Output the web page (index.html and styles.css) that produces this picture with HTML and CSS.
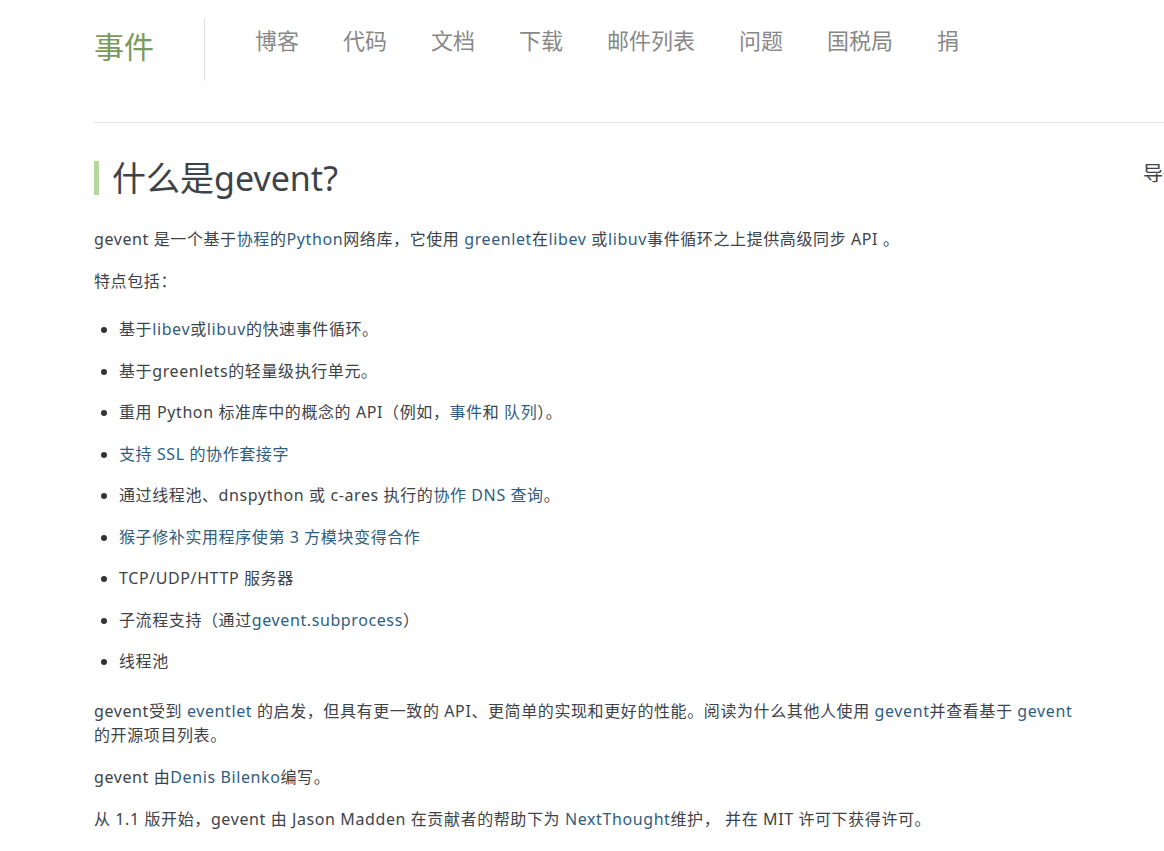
FILE: index.html
```html
<!DOCTYPE html>
<html lang="zh">
<head>
<meta charset="utf-8">
<title>gevent</title>
<link rel="stylesheet" href="styles.css">
</head>
<body>
<div class="page">
  <header class="header">
    <a class="logo" href="#">事件</a>
    <span class="sep"></span>
    <nav class="nav">
      <a href="#">博客</a>
      <a href="#">代码</a>
      <a href="#">文档</a>
      <a href="#">下载</a>
      <a href="#">邮件列表</a>
      <a href="#">问题</a>
      <a href="#">国税局</a>
      <a href="#">捐</a>
    </nav>
  </header>
  <div class="rule"></div>
  <div class="main">
    <article class="content">
      <h1 class="title">什么是gevent?</h1>
      <p>gevent 是一个基于<a href="#">协程</a>的<a href="#">Python</a>网络库，它使用 <a href="#">greenlet</a>在<a href="#">libev</a> 或<a href="#">libuv</a>事件循环之上提供高级同步 API 。</p>
      <p>特点包括：</p>
      <ul class="features">
        <li>基于<a href="#">libev</a>或<a href="#">libuv</a>的快速事件循环。</li>
        <li>基于greenlets的轻量级执行单元。</li>
        <li>重用 Python 标准库中的概念的 API（例如，<a href="#">事件</a>和 <a href="#">队列</a>）。</li>
        <li><a href="#">支持 SSL 的协作套接字</a></li>
        <li>通过线程池、dnspython 或 c-ares 执行的<a href="#">协作 DNS 查询</a>。</li>
        <li><a href="#">猴子修补实用程序使第 3 方模块变得合作</a></li>
        <li>TCP/UDP/HTTP 服务器</li>
        <li>子流程支持（通过<a href="#">gevent.subprocess</a>）</li>
        <li>线程池</li>
      </ul>
      <p class="after-list">gevent受到 <a href="#">eventlet</a> 的启发，但具有更一致的 API、更简单的实现和更好的性能。阅读为什么其他人使用 <a href="#">gevent</a>并查看基于 <a href="#">gevent</a> 的开源项目列表。</p>
      <p>gevent 由<a href="#">Denis Bilenko</a>编写。</p>
      <p>从 1.1 版开始，gevent 由 Jason Madden 在贡献者的帮助下为 <a href="#">NextThought</a>维护， 并在 MIT 许可下获得许可。</p>
    </article>
    <aside class="sidebar">导航</aside>
  </div>
</div>
</body>
</html>
```

FILE: styles.css
```css
html, body {
  margin: 0;
  padding: 0;
  background: #fff;
}
body {
  font-family: "Noto Sans", "Noto Sans CJK SC", sans-serif;
  color: #3e4349;
  font-size: 16px;
  line-height: 24px;
  overflow: hidden;
}
a {
  color: #2f5d80;
  text-decoration: none;
}
.page {
  padding-left: 94px;
}
.header {
  display: flex;
  align-items: flex-start;
  padding-top: 18px;
  height: 122px;
  box-sizing: border-box;
}
.logo {
  font-family: "Noto Sans CJK SC", sans-serif;
  font-size: 30px;
  line-height: 30px;
  color: #7a9a5c;
  margin-top: 12px;
  width: 110px;
}
.sep {
  width: 1px;
  height: 63px;
  background: #e0e0e0;
}
.nav {
  display: flex;
  gap: 44px;
  margin-left: 50px;
  margin-top: 7px;
}
.nav a {
  font-family: "Noto Sans CJK SC", sans-serif;
  font-size: 22px;
  line-height: 28px;
  color: #888;
}
.rule {
  height: 1px;
  background: #e2e2e2;
}
.main {
  display: flex;
  align-items: flex-start;
}
.content {
  width: 985px;
  flex: none;
  letter-spacing: 0.6px;
}
.sidebar {
  margin-left: 64px;
  margin-top: 38px;
  font-size: 20px;
  line-height: 26px;
  white-space: nowrap;
  color: #3e4349;
}
.title {
  margin: 38px 0 32px;
  border-left: 5px solid #b6d89c;
  padding-left: 13px;
  font-size: 34px;
  line-height: 36px;
  font-weight: normal;
  letter-spacing: 0;
  color: #3e4349;
  height: 34px;
  display: flex;
  align-items: center;
}
.content p {
  margin: 0 0 18px;
}
.features {
  margin: 24px 0 26px;
  padding-left: 25px;
}
.features li {
  margin-bottom: 17.5px;
}
.features li::marker {
  color: #333;
}
```
